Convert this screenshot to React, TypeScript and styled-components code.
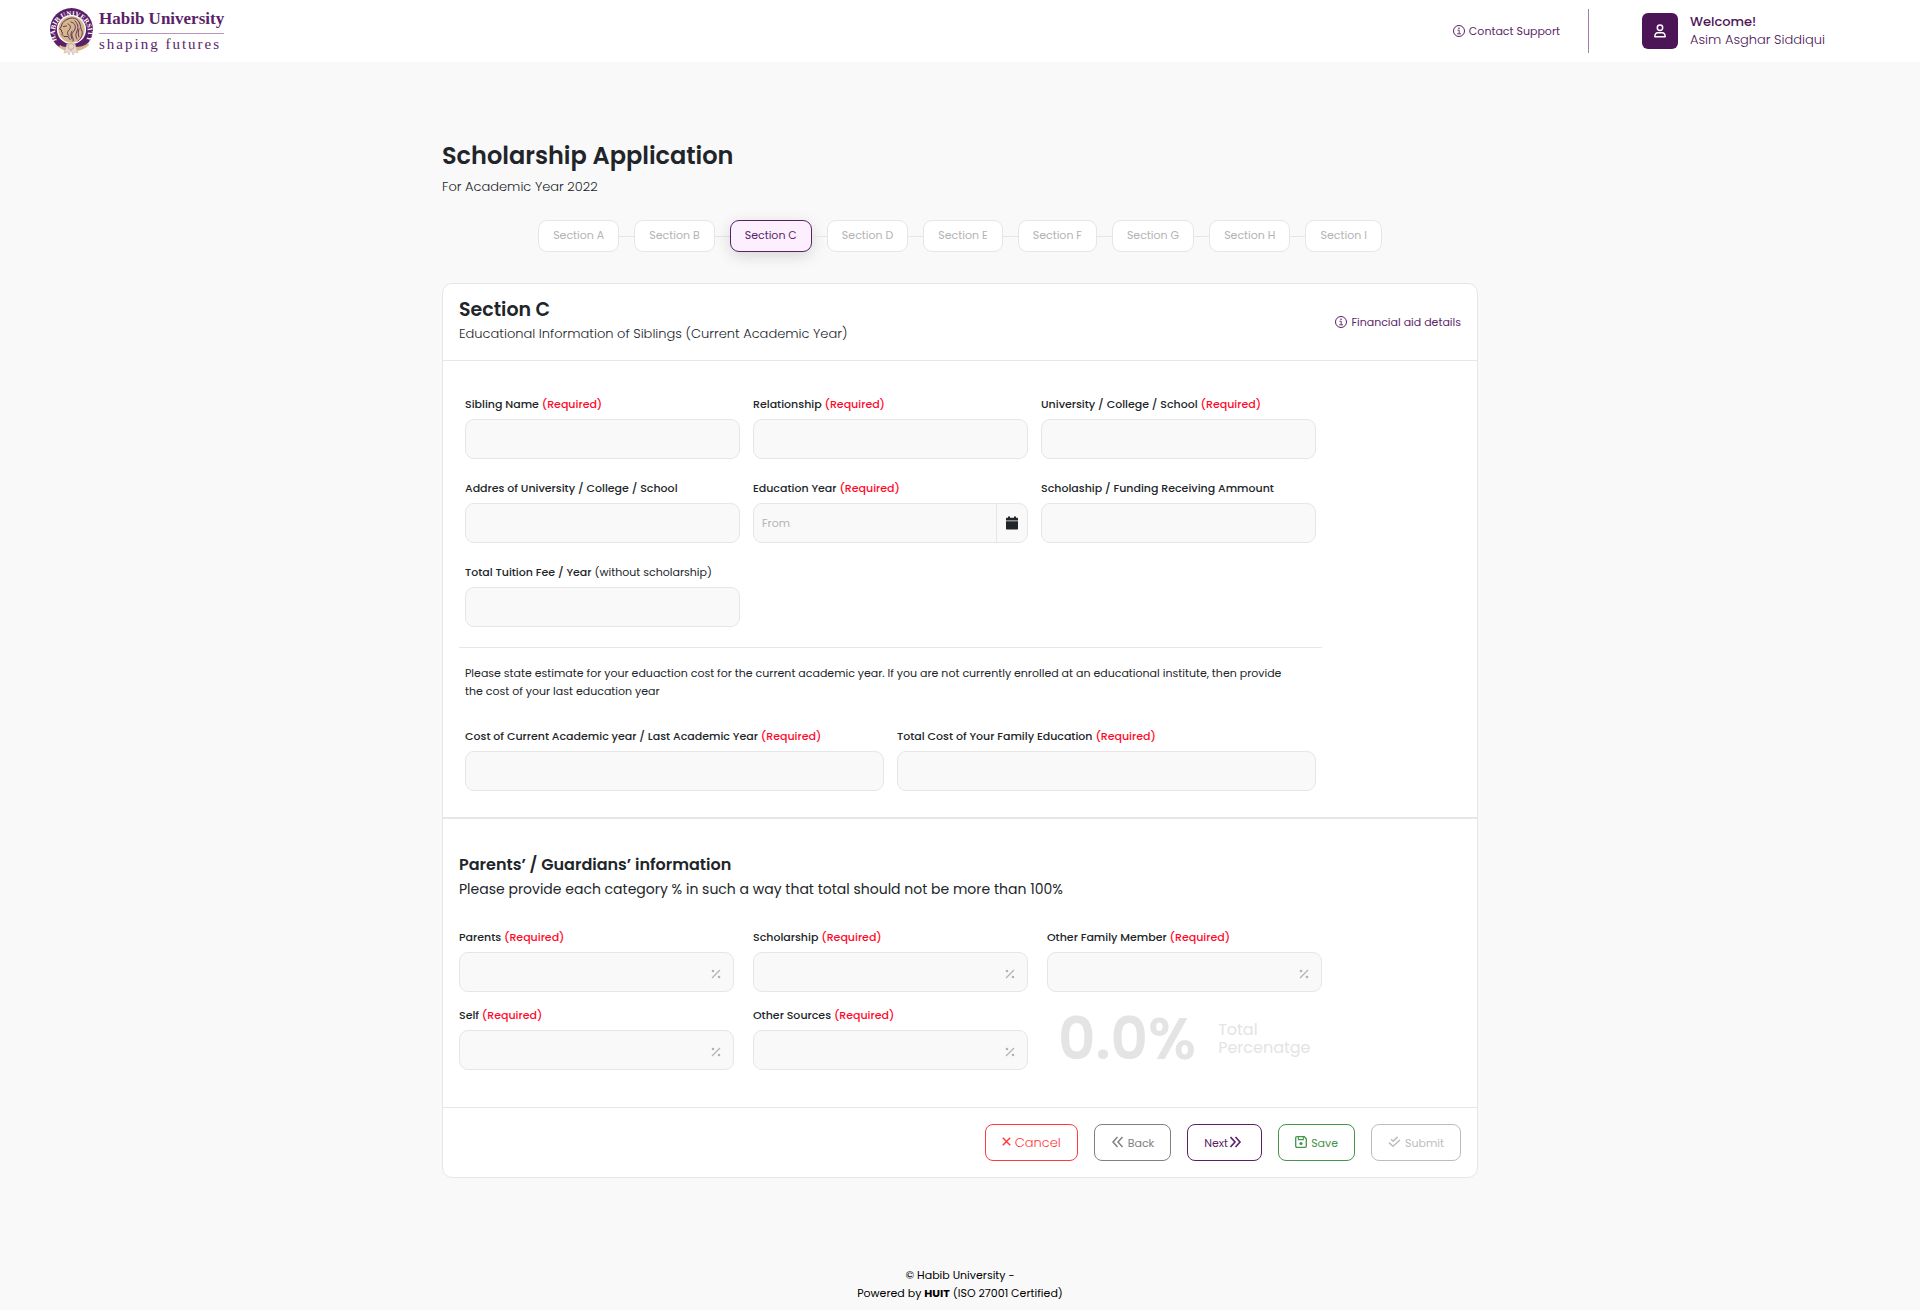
import React, { useId, useState } from 'react';
import styled, { createGlobalStyle, css } from 'styled-components';

const color = {
  page: '#f9f9f9',
  line: '#e6e6e6',
  text: '#212529',
  purple: '#5b1f69',
  deep: '#4c1556',
  required: '#ff0a2a',
  muted: '#b3b3b3',
};

const GlobalStyle = createGlobalStyle`
  *, *::before, *::after { box-sizing: border-box; }
  body {
    margin: 0;
    background: ${color.page};
    color: ${color.text};
    font-family: Poppins, Inter, "Open Sans", sans-serif;
    font-size: 11px;
    line-height: 18px;
  }
  h1, h2, h3, p { margin: 0; }
  button, input { font: inherit; }
`;

const TopBar = styled.header`
  display: flex;
  align-items: center;
  justify-content: space-between;
  height: 62px;
  padding: 0 48px;
  background: #fff;
`;

const Logo = styled.a`
  display: flex;
  align-items: center;
  gap: 4px;
  color: ${color.purple};
  text-decoration: none;
  font-family: "Liberation Serif", serif;
`;

const LogoWords = styled.span`
  display: flex;
  flex-direction: column;
`;

const LogoName = styled.span`
  padding-bottom: 3px;
  border-bottom: 1px solid #b795bd;
  font-size: 17px;
  line-height: 22px;
  font-weight: 700;
`;

const LogoMotto = styled.span`
  font-size: 15px;
  line-height: 20px;
  letter-spacing: 2px;
`;

const TopRight = styled.div`
  display: flex;
  align-items: center;
`;

const InfoLink = styled.a`
  display: inline-flex;
  align-items: center;
  gap: 4px;
  color: ${color.purple};
  text-decoration: none;
`;

const Divider = styled.span`
  width: 1px;
  height: 44px;
  margin: 0 53px 0 28px;
  background: #a27fab;
`;

const Profile = styled.div`
  display: flex;
  align-items: center;
  gap: 12px;
  min-width: 230px;
  color: ${color.deep};
  font-size: 13px;
  font-weight: 300;
`;

const Avatar = styled.span`
  display: grid;
  place-items: center;
  width: 36px;
  height: 36px;
  border-radius: 6px;
  background: ${color.deep};
  color: #fff;
`;

const Welcome = styled.strong`
  display: block;
  font-weight: 500;
`;

const Page = styled.main`
  width: 100%;
  max-width: 1036px;
  margin: 0 auto;
  padding-top: 76px;
`;

const Title = styled.h1`
  font-size: 24px;
  line-height: 36px;
  font-weight: 600;
`;

const Lead = styled.p`
  margin-top: 3px;
  font-size: 13px;
  line-height: 20px;
  font-weight: 300;
`;

const Steps = styled.ol`
  display: flex;
  justify-content: center;
  margin: 23px 0 31px;
  padding: 0;
  list-style: none;
`;

const Step = styled.li`
  display: flex;
  align-items: center;
  & + &::before {
    content: '';
    width: 15px;
    height: 1px;
    background: ${color.line};
  }
`;

const StepButton = styled.button<{ $active: boolean }>`
  height: 32px;
  padding: 0 14px 2px;
  border: 1px solid ${color.line};
  border-radius: 9px;
  background: #fff;
  color: ${color.muted};
  ${(p) =>
    p.$active &&
    css`
      border-color: ${color.purple};
      background: #fcf0ff;
      color: ${color.purple};
      box-shadow: 0 4px 16px rgba(0, 0, 0, 0.14);
    `}
`;

const Card = styled.form`
  border: 1px solid ${color.line};
  border-radius: 10px;
  background: #fff;
`;

const CardHead = styled.div`
  display: flex;
  align-items: center;
  justify-content: space-between;
  padding: 14px 16px;
  border-bottom: 1px solid ${color.line};
`;

const CardTitle = styled.h2`
  font-size: 19px;
  line-height: 24px;
  font-weight: 600;
`;

const CardSub = styled.p`
  margin: 2px 0;
  font-size: 13px;
  line-height: 20px;
  font-weight: 300;
`;

const Siblings = styled.section`
  padding: 34px 16px 26px;
  border-bottom: 2px solid ${color.line};
`;

const Narrow = styled.div`
  max-width: 863px;
`;

const Grid = styled.div<{ $columns: number; $gap: string; $inset?: boolean }>`
  display: grid;
  grid-template-columns: repeat(${(p) => p.$columns}, minmax(0, 1fr));
  gap: ${(p) => p.$gap};
  padding: 0 ${(p) => (p.$inset ? '6px' : '0')};
`;

const Rule = styled.hr`
  height: 1px;
  margin: 20px 0 16px;
  border: 0;
  background: ${color.line};
`;

const Note = styled.p`
  margin-bottom: 27px;
  padding: 0 24px 0 6px;
`;

const FieldBox = styled.div`
  display: flex;
  flex-direction: column;
  gap: 6px;
`;

const Label = styled.label`
  font-weight: 500;
`;

const Required = styled.span`
  color: ${color.required};
`;

const Hint = styled.span`
  font-weight: 400;
`;

const Control = styled.div`
  display: flex;
  align-items: center;
  height: 40px;
  border: 1px solid ${color.line};
  border-radius: 9px;
  background: ${color.page};
  color: ${color.muted};
  overflow: hidden;
`;

const Input = styled.input`
  flex: 1;
  min-width: 0;
  height: 100%;
  padding: 0 8px;
  border: 0;
  background: transparent;
  color: ${color.text};
  &::placeholder {
    color: ${color.muted};
    opacity: 1;
  }
`;

const Percent = styled.svg`
  flex: none;
  margin: 4px 12px 0 0;
`;

const CalendarButton = styled.button`
  display: grid;
  place-items: center;
  width: 31px;
  height: 100%;
  padding: 0;
  border: 0;
  border-left: 1px solid ${color.line};
  background: transparent;
  color: ${color.text};
`;

const Guardians = styled.section`
  padding: 34px 16px 37px;
`;

const SubTitle = styled.h3`
  font-size: 16px;
  line-height: 24px;
  font-weight: 600;
`;

const SubLead = styled.p`
  margin-bottom: 27px;
  font-size: 14px;
  line-height: 24px;
`;

const Total = styled.div`
  display: flex;
  align-items: center;
  gap: 22px;
  padding: 2px 0 0 11px;
  color: #e4e4e4;
`;

const TotalValue = styled.output`
  font-size: 58px;
  line-height: 62px;
  font-weight: 600;
`;

const TotalLabel = styled.span`
  font-size: 16px;
`;

const Actions = styled.div`
  display: flex;
  justify-content: flex-end;
  gap: 16px;
  padding: 16px;
  border-top: 1px solid ${color.line};
`;

const ActionButton = styled.button<{ $tone: string; $large?: boolean; $tight?: boolean }>`
  display: inline-flex;
  align-items: center;
  justify-content: center;
  gap: ${(p) => (p.$tight ? '2px' : '4px')};
  height: 37px;
  padding: 0 16px;
  border: 1px solid ${(p) => p.$tone};
  border-radius: 8px;
  background: #fff;
  color: ${(p) => p.$tone};
  font-size: ${(p) => (p.$large ? '13px' : '11px')};
  font-weight: ${(p) => (p.$large ? 300 : 400)};
`;

const ActionGlyph = styled.svg`
  flex: none;
  margin-bottom: 2px;
  fill: none;
  stroke: currentColor;
`;

const Footer = styled.footer`
  margin-top: 88px;
  padding-bottom: 8px;
  color: #000;
  text-align: center;
`;

function Seal() {
  return (
    <svg width="47" height="48" viewBox="0 0 47 48" aria-hidden="true">
      <defs>
        <path id="seal-arc" d="M11.100 36.400 A16.600 16.600 0 1 1 35.900 36.400" />
      </defs>
      <circle cx="23.5" cy="22.5" r="21.5" fill="#5b1f69" />
      <circle cx="23.5" cy="22.5" r="14.6" fill="#fff" />
      <circle cx="23.5" cy="22.5" r="13.2" fill="#d3b987" />
      <text fill="#fff" fontFamily="Liberation Serif, serif" fontSize="7" fontWeight="700">
        <textPath href="#seal-arc" startOffset="50%" textAnchor="middle">
          HABIB UNIVERSITY
        </textPath>
      </text>
      <g fill="none" stroke="#5b1f69" strokeWidth="0.9" strokeLinecap="round">
        <path d="M20 12c-3 1-5 3-6 5l-1 3-1.500 2 2 1v2l1 .5-.5 2 2 2h4l2 3" />
        <path d="M20 12c4-2 9-1 11 3 2 3 1 6 3 9 1 4-1 8-4 10" />
        <path d="M23 15c4 1 5 4 4 7s-4 4-3 7 2 3 1 5" />
        <path d="M27 14c4 4 3 7 2 10s-2 4 0 8M20 17c3 1 3 4 1 6s-2 4 0 6" />
        <path d="M15.500 19.500l3-.5M31 22c-1 3-1 5 0 8M24 24c-2 3-1 5 0 8" />
      </g>
      <path d="M12 38c3 2 5 2 8 2h7c5 0 9-1 13-4l1 2c-4 4-9 6-14 6h-7c-4 0-7-2-9-4z" fill="#d3b987" />
      <path
        d="M19 37l-3 9 3.500-1 1.500 3 2-5 2 5 1.500-3 3.500 1-3-9z"
        fill="#ead9cf"
        stroke="#c4a9a4"
        strokeWidth=".5"
      />
      <circle cx="23" cy="39.500" r="3" fill="#ead9b8" stroke="#b897a8" strokeWidth=".7" />
    </svg>
  );
}

function InfoIcon() {
  return (
    <svg width="12" height="12" viewBox="0 0 12 12" fill="none" stroke="currentColor" aria-hidden="true">
      <circle cx="6" cy="6" r="5.500" />
      <path d="M4.500 5.200h1.700v3.500M4.200 8.800h3.800" strokeWidth=".9" />
      <circle cx="6" cy="3.200" r=".5" fill="currentColor" strokeWidth=".5" />
    </svg>
  );
}

function UserIcon() {
  return (
    <svg width="12" height="14" viewBox="0 0 12 14" fill="none" stroke="currentColor" aria-hidden="true">
      <circle cx="6" cy="3.700" r="2.700" strokeWidth="1.500" />
      <path
        d="M3.600 8.800h4.800c1.600 0 2.600 1.600 2.800 3.900H.8c.2-2.300 1.200-3.900 2.800-3.900z"
        strokeWidth="1.500"
        strokeLinejoin="round"
      />
    </svg>
  );
}

function CalendarIcon() {
  return (
    <svg width="12" height="14" viewBox="0 0 12 14" fill="currentColor" aria-hidden="true">
      <path d="M2 .5h2v1.300h4V.5h2v1.300h1c.6 0 1 .4 1 1v1.600H0V2.800c0-.6.4-1 1-1h1z" />
      <path d="M0 5.300h12v7.200c0 .6-.4 1-1 1H1c-.6 0-1-.4-1-1z" />
    </svg>
  );
}

function PercentIcon() {
  return (
    <Percent width="10" height="10" viewBox="0 0 10 10" aria-hidden="true">
      <path d="M1 9L9 1" stroke="currentColor" strokeWidth="1.300" />
      <circle cx="2" cy="2" r="1.300" fill="currentColor" />
      <circle cx="8" cy="8" r="1.300" fill="currentColor" />
    </Percent>
  );
}

function CrossIcon() {
  return (
    <ActionGlyph width="9" height="9" viewBox="0 0 9 9" aria-hidden="true">
      <path d="M.8.8l7.400 7.400M8.200.8L.8 8.200" strokeWidth="1.500" />
    </ActionGlyph>
  );
}

function BackIcon() {
  return (
    <ActionGlyph width="13" height="12" viewBox="0 0 13 12" aria-hidden="true">
      <path d="M6.500 1L2 6l4.500 5M11.500 1L7 6l4.500 5" strokeWidth="1.500" />
    </ActionGlyph>
  );
}

function NextIcon() {
  return (
    <ActionGlyph width="15" height="12" viewBox="1 0 15 12" aria-hidden="true">
      <path d="M1.500 1L6 6l-4.500 5M6.500 1L11 6l-4.500 5" strokeWidth="1.600" />
    </ActionGlyph>
  );
}

function SaveIcon() {
  return (
    <ActionGlyph width="12" height="12" viewBox="0 0 12 12" aria-hidden="true">
      <path d="M2 .7h7.300l2 2V10c0 .8-.5 1.300-1.300 1.300H2c-.8 0-1.300-.5-1.300-1.300V2C.7 1.200 1.200.7 2 .7z" strokeWidth="1.300" />
      <path d="M3.400 1v2.600h4.900V1" strokeWidth="1.100" />
      <circle cx="6" cy="7.500" r="1.600" fill="currentColor" stroke="none" />
    </ActionGlyph>
  );
}

function SubmitIcon() {
  return (
    <ActionGlyph width="13" height="12" viewBox="0 0 13 12" aria-hidden="true">
      <path d="M3 3.300l2.200 2L9.600.9" strokeWidth="1.500" />
      <path d="M1 6.600l4 3.700 7-6.300" strokeWidth="1.500" />
    </ActionGlyph>
  );
}

type FieldProps = {
  label: string;
  required?: boolean;
  hint?: string;
  placeholder?: string;
  kind?: 'text' | 'date' | 'percent';
  onValue?: (value: string) => void;
};

function Field({ label, required, hint, placeholder, kind = 'text', onValue }: FieldProps) {
  const id = useId();
  return (
    <FieldBox>
      <Label htmlFor={id}>
        {label}
        {required && <Required> (Required)</Required>}
        {hint && <Hint> {hint}</Hint>}
      </Label>
      <Control>
        <Input
          id={id}
          type="text"
          placeholder={placeholder}
          inputMode={kind === 'percent' ? 'decimal' : undefined}
          onChange={(e) => onValue?.(e.target.value)}
        />
        {kind === 'percent' && <PercentIcon />}
        {kind === 'date' && (
          <CalendarButton type="button" aria-label="Choose year">
            <CalendarIcon />
          </CalendarButton>
        )}
      </Control>
    </FieldBox>
  );
}

const sections = ['A', 'B', 'C', 'D', 'E', 'F', 'G', 'H', 'I'];
const sources = ['Parents', 'Scholarship', 'Other Family Member', 'Self', 'Other Sources'];

export default function App() {
  const [active, setActive] = useState('C');
  const [shares, setShares] = useState<Record<string, number>>({});
  const total = Object.values(shares).reduce((sum, n) => sum + n, 0);

  return (
    <>
      <GlobalStyle />
      <TopBar>
        <Logo href="#">
          <Seal />
          <LogoWords>
            <LogoName>Habib University</LogoName>
            <LogoMotto>shaping futures</LogoMotto>
          </LogoWords>
        </Logo>
        <TopRight>
          <InfoLink href="#support">
            <InfoIcon />
            Contact Support
          </InfoLink>
          <Divider />
          <Profile>
            <Avatar>
              <UserIcon />
            </Avatar>
            <div>
              <Welcome>Welcome!</Welcome>
              Asim Asghar Siddiqui
            </div>
          </Profile>
        </TopRight>
      </TopBar>

      <Page>
        <Title>Scholarship Application</Title>
        <Lead>For Academic Year 2022</Lead>
        <Steps>
          {sections.map((s) => (
            <Step key={s}>
              <StepButton type="button" $active={s === active} onClick={() => setActive(s)}>
                Section {s}
              </StepButton>
            </Step>
          ))}
        </Steps>

        <Card onSubmit={(e) => e.preventDefault()}>
          <CardHead>
            <div>
              <CardTitle>Section C</CardTitle>
              <CardSub>Educational Information of Siblings (Current Academic Year)</CardSub>
            </div>
            <InfoLink href="#aid">
              <InfoIcon />
              Financial aid details
            </InfoLink>
          </CardHead>

          <Siblings>
            <Narrow>
              <Grid $columns={3} $gap="20px 13px" $inset>
                <Field label="Sibling Name" required />
                <Field label="Relationship" required />
                <Field label="University / College / School" required />
                <Field label="Addres of University / College / School" />
                <Field label="Education Year" required placeholder="From" kind="date" />
                <Field label="Scholaship / Funding Receiving Ammount" />
                <Field label="Total Tuition Fee / Year" hint="(without scholarship)" />
              </Grid>
              <Rule />
              <Note>
                Please state estimate for your eduaction cost for the current academic year. If you are not
                currently enrolled at an educational institute, then provide the cost of your last education year
              </Note>
              <Grid $columns={2} $gap="13px" $inset>
                <Field label="Cost of Current Academic year / Last Academic Year" required />
                <Field label="Total Cost of Your Family Education" required />
              </Grid>
            </Narrow>
          </Siblings>

          <Guardians>
            <SubTitle>Parents’ / Guardians’ information</SubTitle>
            <SubLead>Please provide each category % in such a way that total should not be more than 100%</SubLead>
            <Narrow>
              <Grid $columns={3} $gap="14px 19px">
                {sources.map((name) => (
                  <Field
                    key={name}
                    label={name}
                    required
                    kind="percent"
                    onValue={(v) => setShares((old) => ({ ...old, [name]: Number(v) || 0 }))}
                  />
                ))}
                <Total>
                  <TotalValue>{total.toFixed(1)}%</TotalValue>
                  <TotalLabel>
                    Total
                    <br />
                    Percenatge
                  </TotalLabel>
                </Total>
              </Grid>
            </Narrow>
          </Guardians>

          <Actions>
            <ActionButton type="button" $tone="#ff3b3b" $large>
              <CrossIcon />
              Cancel
            </ActionButton>
            <ActionButton type="button" $tone="#808080">
              <BackIcon />
              Back
            </ActionButton>
            <ActionButton type="button" $tone={color.purple} $tight>
              Next
              <NextIcon />
            </ActionButton>
            <ActionButton type="button" $tone="#43964b">
              <SaveIcon />
              Save
            </ActionButton>
            <ActionButton type="submit" $tone="#bdbdbd">
              <SubmitIcon />
              Submit
            </ActionButton>
          </Actions>
        </Card>
      </Page>

      <Footer>
        <p>© Habib University -</p>
        <p>
          Powered by <strong>HUIT</strong> (ISO 27001 Certified)
        </p>
      </Footer>
    </>
  );
}
